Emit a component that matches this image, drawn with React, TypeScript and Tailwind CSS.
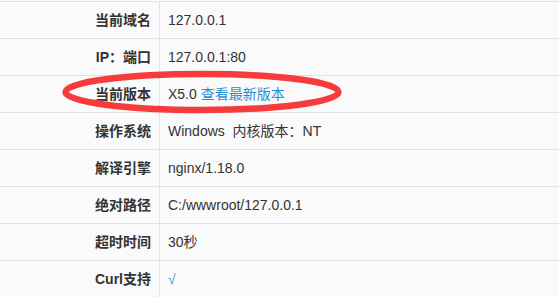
import React from "react";

const rows: { label: string; value: React.ReactNode }[] = [
  { label: "当前域名", value: "127.0.0.1" },
  { label: "IP：端口", value: "127.0.0.1:80" },
  {
    label: "当前版本",
    value: (
      <>
        X5.0 <a className="text-[#1e90d8]">查看最新版本</a>
      </>
    ),
  },
  { label: "操作系统", value: "Windows  内核版本：NT" },
  { label: "解译引擎", value: "nginx/1.18.0" },
  { label: "绝对路径", value: "C:/wwwroot/127.0.0.1" },
  { label: "超时时间", value: "30秒" },
  { label: "Curl支持", value: <span className="text-[#3a9fc9]">√</span> },
];

const App = () => {
  return (
    <div
      className="relative w-[559px] h-[297px] overflow-hidden bg-[#fafafa] pt-px"
      style={{ fontFamily: '"Liberation Sans", "Noto Sans CJK SC", sans-serif' }}
    >
      <div className="border-t border-[#e2e2e2]">
        {rows.map((row) => (
          <div key={row.label} className="flex h-[37px] border-b border-[#e2e2e2]">
            <div className="w-[160px] shrink-0 flex items-center justify-end pr-2 border-r border-[#e2e2e2] text-[14px] font-bold text-[#333]">
              {row.label}
            </div>
            <div className="flex-1 flex items-center pl-2 text-[14px] text-[#333] whitespace-pre">
              {row.value}
            </div>
          </div>
        ))}
      </div>

      {/* red annotation ring */}
      <svg className="absolute left-0 top-0 pointer-events-none" width="559" height="297">
        <ellipse
          cx="202"
          cy="92"
          rx="136.5"
          ry="18"
          fill="none"
          stroke="#f53b3b"
          strokeWidth="6.5"
        />
      </svg>
    </div>
  );
};

export default App;
